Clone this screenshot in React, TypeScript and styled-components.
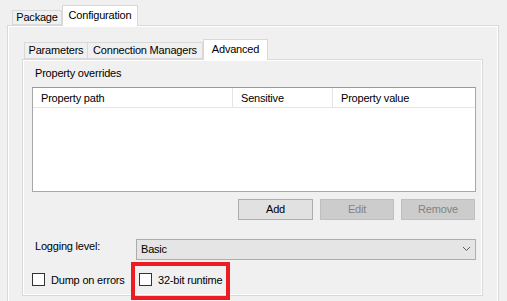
import React from 'react'
import styled, { createGlobalStyle } from 'styled-components'

const GlobalStyle = createGlobalStyle`
  html, body {
    margin: 0;
    padding: 0;
    background: #f0f0f0;
  }
  body {
    font-family: "Liberation Sans", Arial, sans-serif;
    font-size: 11px;
    color: #000;
  }
  * {
    box-sizing: border-box;
  }
`

const Window = styled.div`
  position: relative;
  width: 507px;
  height: 301px;
  overflow: hidden;
  background: #f0f0f0;
  padding: 5px 0 0 7px;
`

const TabStrip = styled.div<{ $indent: number }>`
  display: flex;
  align-items: flex-end;
  height: 20px;
  padding-left: ${(p) => p.$indent}px;
  position: relative;
  z-index: 1;
`

const Tab = styled.div<{ $width: number; $active?: boolean; $lift: number }>`
  width: ${(p) => p.$width}px;
  height: ${(p) => (p.$active ? 21 : 20 - p.$lift)}px;
  margin-bottom: ${(p) => (p.$active ? -1 : 0)}px;
  border: 1px solid #d9d9d9;
  border-bottom: ${(p) => (p.$active ? 'none' : '1px solid #d9d9d9')};
  border-left: ${(p) => (p.$first || p.$active ? '1px solid #d9d9d9' : 'none')};
  background: ${(p) => (p.$active ? '#ffffff' : '#f0f0f0')};
  display: flex;
  align-items: center;
  justify-content: center;
  padding-bottom: ${(p) => (p.$active ? 2 : 1)}px;
  white-space: nowrap;
  letter-spacing: -0.2px;
` as any

const Page = styled.div<{ $width: number; $height: number }>`
  width: ${(p) => p.$width}px;
  height: ${(p) => p.$height}px;
  border: 1px solid #d9d9d9;
  background: #ffffff;
  padding: 1px;
`

const PageBody = styled.div`
  width: 100%;
  height: 100%;
  background: #f0f0f0;
  display: flex;
  flex-direction: column;
`

const InnerTabs = styled.div`
  margin: 12px 0 0 13px;
`

const SectionLabel = styled.div`
  margin: 5px 0 0 11px;
  height: 14px;
  line-height: 14px;
  letter-spacing: -0.2px;
`

const List = styled.div`
  margin: 7px 0 0 8px;
  width: 444px;
  height: 105px;
  border: 1px solid #a7a7a7;
  border-top-color: #9a9a9a;
  background: #fff;
`

const ListHeader = styled.div`
  display: flex;
  height: 20px;
  border-bottom: 1px solid #e5e5e5;
`

const HeaderCell = styled.div<{ $width?: number }>`
  ${(p) => (p.$width ? `width: ${p.$width}px;` : 'flex: 1;')}
  border-right: 1px solid #e5e5e5;
  padding-left: 8px;
  display: flex;
  align-items: center;
  letter-spacing: -0.2px;
  &:last-child {
    border-right: none;
  }
`

const ButtonRow = styled.div`
  display: flex;
  justify-content: flex-end;
  gap: 7px;
  margin: 7px 0 0 8px;
  width: 444px;
  padding-right: 1px;
`

const Button = styled.div<{ $width: number; $disabled?: boolean }>`
  width: ${(p) => p.$width}px;
  height: 21px;
  border: 1px solid ${(p) => (p.$disabled ? '#bfbfbf' : '#adadad')};
  background: ${(p) => (p.$disabled ? '#cccccc' : '#e1e1e1')};
  color: ${(p) => (p.$disabled ? '#838383' : '#000')};
  display: flex;
  align-items: center;
  justify-content: center;
  padding-bottom: 1px;
  letter-spacing: -0.2px;
`

const FieldRow = styled.div`
  display: flex;
  margin: 19px 0 0 11px;
`

const FieldLabel = styled.div`
  width: 101px;
  padding-top: 1px;
  letter-spacing: -0.2px;
`

const Combo = styled.div`
  width: 340px;
  height: 21px;
  border: 1px solid #adadad;
  background: #e5e5e5;
  display: flex;
  align-items: center;
  justify-content: space-between;
  padding: 0 4px 1px 4px;
  letter-spacing: -0.2px;
`

const CheckRow = styled.div`
  display: flex;
  margin: 13px 0 0 8px;
`

const Check = styled.label<{ $width: number }>`
  width: ${(p) => p.$width}px;
  display: flex;
  align-items: center;
  gap: 6px;
  letter-spacing: -0.2px;
`

const Box = styled.span`
  width: 13px;
  height: 13px;
  border: 1px solid #333;
  background: #fff;
  flex: none;
`

const Highlight = styled.div`
  position: absolute;
  left: 131px;
  top: 262px;
  width: 99px;
  height: 38px;
  border: 4px solid #ed1c24;
`

function Chevron() {
  return (
    <svg width="9" height="6" viewBox="0 0 9 6">
      <polyline points="1,1 4.5,4.5 8,1" fill="none" stroke="#5a5a5a" strokeWidth="1" />
    </svg>
  )
}

export default function App() {
  return (
    <>
      <GlobalStyle />
      <Window>
        <TabStrip $indent={5}>
          <Tab $width={50} $lift={5} $first>Package</Tab>
          <Tab $width={76} $lift={0} $active>Configuration</Tab>
        </TabStrip>
        <Page $width={492} $height={290}>
          <PageBody>
            <InnerTabs>
              <TabStrip $indent={2}>
                <Tab $width={64} $lift={3} $first>Parameters</Tab>
                <Tab $width={115} $lift={3}>Connection Managers</Tab>
                <Tab $width={65} $lift={0} $active>Advanced</Tab>
              </TabStrip>
              <Page $width={461} $height={237}>
                <PageBody>
                  <SectionLabel>Property overrides</SectionLabel>
                  <List>
                    <ListHeader>
                      <HeaderCell $width={200}>Property path</HeaderCell>
                      <HeaderCell $width={100}>Sensitive</HeaderCell>
                      <HeaderCell>Property value</HeaderCell>
                    </ListHeader>
                  </List>
                  <ButtonRow>
                    <Button $width={75}>Add</Button>
                    <Button $width={74} $disabled>Edit</Button>
                    <Button $width={74} $disabled>Remove</Button>
                  </ButtonRow>
                  <FieldRow>
                    <FieldLabel>Logging level:</FieldLabel>
                    <Combo>
                      <span>Basic</span>
                      <Chevron />
                    </Combo>
                  </FieldRow>
                  <CheckRow>
                    <Check $width={107}>
                      <Box />
                      Dump on errors
                    </Check>
                    <Check $width={120}>
                      <Box />
                      32-bit runtime
                    </Check>
                  </CheckRow>
                </PageBody>
              </Page>
            </InnerTabs>
          </PageBody>
        </Page>
        <Highlight />
      </Window>
    </>
  )
}
